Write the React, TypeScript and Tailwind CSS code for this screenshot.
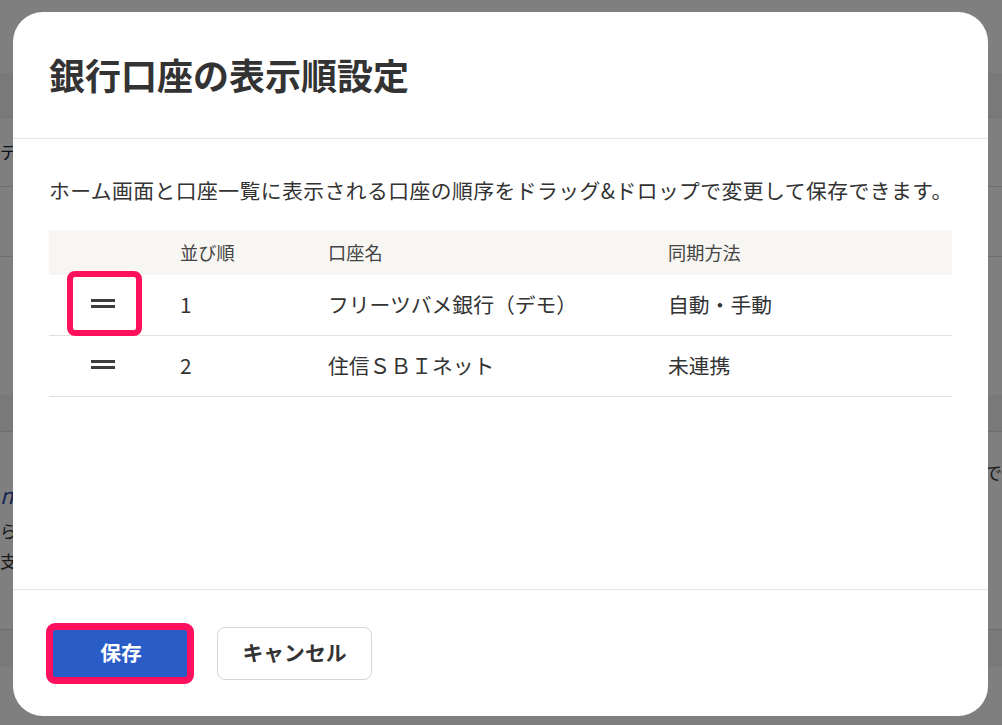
import React from "react";

function Handle() {
  return (
    <svg width="24" height="9" viewBox="0 0 24 9" className="-mt-[3px]">
      <rect x="0" y="0" width="24" height="3" fill="#3d3d3d" />
      <rect x="0" y="6" width="24" height="3" fill="#3d3d3d" />
    </svg>
  );
}

const rows = [
  { n: "1", name: "フリーツバメ銀行（デモ）", sync: "自動・手動" },
  { n: "2", name: "住信ＳＢＩネット", sync: "未連携" },
];

export default function App() {
  return (
    <div className="relative h-[725px] w-full overflow-hidden bg-white font-['Noto_Sans_CJK_JP','Noto_Sans',sans-serif] text-[#333]">
      {/* underlying page */}
      <div className="flex flex-col">
        <div className="h-[73px] bg-white" />
        <div className="h-[45px] bg-[#f3f3f3] border-b border-[#e4e4e4]" />
        <div className="h-[69px] border-b border-[#dcdcdc] flex items-center">
          <span className="text-[17px] text-[#123]">デ</span>
        </div>
        <div className="h-[70px] border-b border-[#dcdcdc]" />
        <div className="h-[138px]" />
        <div className="h-[37px] bg-[#f3f3f3] border-b border-[#dcdcdc]" />
        <div className="h-[198px] border-b border-[#dcdcdc] flex">
          <div className="flex flex-col pt-[50px]">
            <span className="text-[22px] italic text-[#2a4aa8] leading-[24px]">n</span>
            <span className="mt-[10px] text-[17px] leading-[30px]">ら</span>
            <span className="text-[17px] leading-[30px]">支</span>
          </div>
          <div className="ml-auto pt-[28px] text-[18px] leading-[24px]">で</div>
        </div>
        <div className="h-[37px] bg-[#f3f3f3]" />
      </div>

      {/* overlay */}
      <div className="absolute inset-0 bg-black/50 flex pt-[12px] pl-[13px] pr-[14px] pb-[9px]">
        <div className="flex flex-col w-full h-full bg-white rounded-[30px] overflow-hidden">
          <div className="h-[127px] flex items-center px-[36px] border-b border-[#e6e6e6] shrink-0">
            <h1 className="text-[36px] font-bold leading-none text-[#333] -mt-[2px]">銀行口座の表示順設定</h1>
          </div>

          <div className="flex-1 px-[36px] pt-[36px]">
            <p className="text-[20.8px] leading-[31px] tracking-[0.45px] text-[#333] whitespace-nowrap">
              ホーム画面と口座一覧に表示される口座の順序をドラッグ&ドロップで変更して保存できます。
            </p>

            <div className="relative mt-[24px]">
              <div className="grid grid-cols-[115px_148px_340px_1fr] h-[45px] items-center bg-[#f7f6f2] text-[18.2px] text-[#444]">
                <div />
                <div className="pl-[16px]">並び順</div>
                <div className="pl-[16px]">口座名</div>
                <div className="pl-[16px]">同期方法</div>
              </div>
              {rows.map((r) => (
                <div
                  key={r.n}
                  className="grid grid-cols-[115px_148px_340px_1fr] h-[61px] items-center border-b border-[#e3dfd8] text-[20.8px] text-[#333]"
                >
                  <div className="pl-[42px] flex items-center">
                    <Handle />
                  </div>
                  <div className="pl-[16px]">{r.n}</div>
                  <div className="pl-[16px] whitespace-nowrap">{r.name}</div>
                  <div className="pl-[16px]">{r.sync}</div>
                </div>
              ))}
              <div className="absolute left-[18px] top-[41px] w-[75px] h-[65px] border-[6px] border-[#ff105c] rounded-[8px] pointer-events-none" />
            </div>
          </div>

          <div className="h-[127px] shrink-0 flex items-center gap-[24px] px-[36px] border-t border-[#e6e6e6]">
            <div className="relative">
              <button className="w-[144px] h-[53px] bg-[#2a5cc8] text-white text-[20.8px] font-bold rounded-[6px]">
                保存
              </button>
              <div className="absolute -left-[3px] -top-[4px] w-[148px] h-[61px] border-[7px] border-[#ff105c] rounded-[9px] pointer-events-none" />
            </div>
            <button className="w-[155px] h-[53px] bg-white border border-[#d6d6d6] rounded-[8px] text-[20.8px] font-bold text-[#333]">
              キャンセル
            </button>
          </div>
        </div>
      </div>
    </div>
  );
}
